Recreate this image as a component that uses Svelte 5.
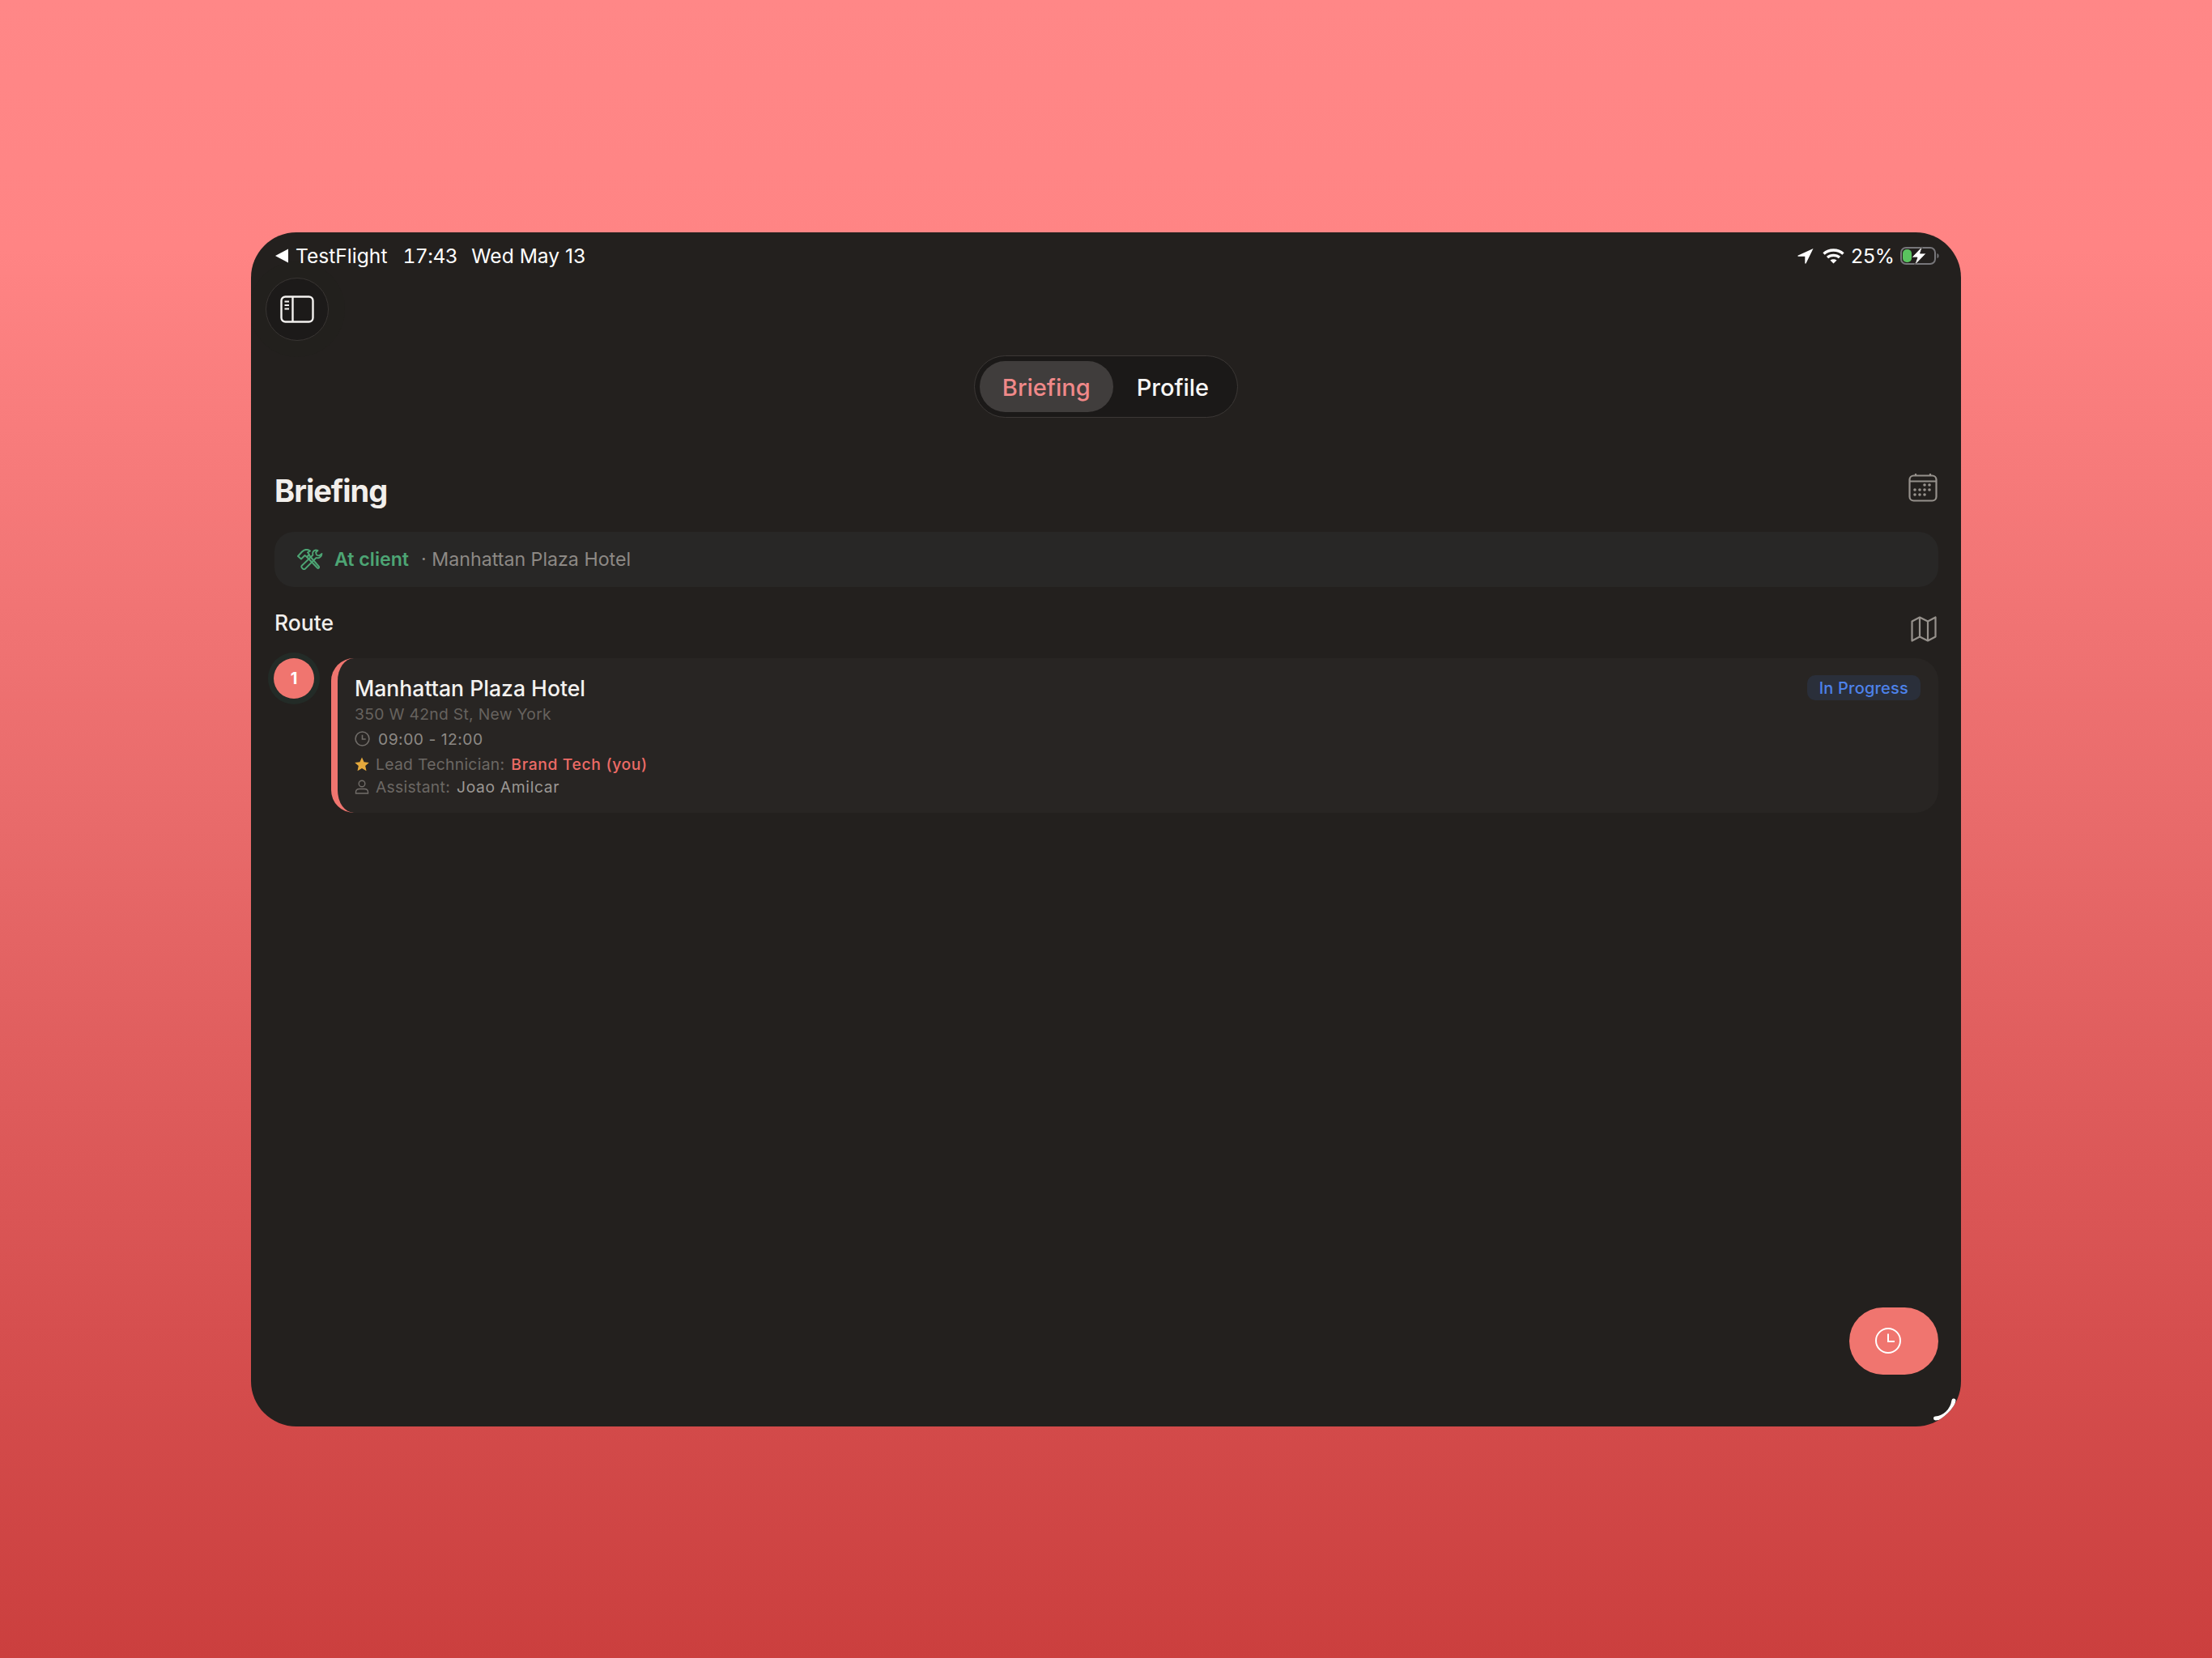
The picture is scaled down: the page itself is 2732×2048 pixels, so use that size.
<script>
  const stop = {
    index: 1,
    name: 'Manhattan Plaza Hotel',
    address: '350 W 42nd St, New York',
    time: '09:00 - 12:00',
    lead: 'Brand Tech (you)',
    assistant: 'Joao Amilcar',
    status: 'In Progress'
  };
</script>

<div class="page">
  <div class="device">
    <div class="status-bar">
      <div class="status-left">
        <svg class="back" width="16" height="18" viewBox="0 0 16 18"><path d="M16 0.5V17.500L0 9Z" fill="#fff"/></svg>
        <span>TestFlight</span>
        <span class="gap clock">17:43</span>
        <span class="gap date">Wed May 13</span>
      </div>
      <div class="status-right">
        <svg width="20" height="20" viewBox="0 0 20 20"><path d="M19.500 1 0.800 9.600c-.7.300-.5 1.200.2 1.200h8.300v8.200c0 .8 1 1 1.300.3Z" fill="#fff"/></svg>
        <svg class="wifi" width="27" height="20" viewBox="0 0 27 20" fill="none" stroke="#fff" stroke-width="3.400">
          <path d="M1.500 7.500C8 1.500 19 1.500 25.500 7.500"/>
          <path d="M6 12C10 8.500 17 8.500 21 12"/>
          <path d="M13.500 19.500 9.500 15.500C11.500 13.700 15.500 13.700 17.500 15.500Z" fill="#fff" stroke="none"/>
        </svg>
        <span class="pct">25%</span>
        <svg width="48" height="24" viewBox="0 0 48 24">
          <rect x="1" y="2" width="42" height="20" rx="6" fill="none" stroke="#77767a" stroke-width="2"/>
          <rect x="3" y="4" width="11" height="16" rx="5" fill="#5ac35f"/>
          <path d="M45.500 9c1.500.5 2 1.500 2 3s-.5 2.500-2 3Z" fill="#77767a"/>
          <path d="M27.500 0 14 14h7L17.500 24 32 9h-7.500Z" fill="#fff" stroke="#23201e" stroke-width="0.800"/>
        </svg>
      </div>
    </div>

    <button class="sidebar-btn" aria-label="Toggle sidebar">
      <svg width="42" height="34" viewBox="0 0 42 34" fill="none" stroke="#f4f2f0" stroke-width="2.400">
        <rect x="1.500" y="1.500" width="39" height="31" rx="5"/>
        <path d="M15.500 1.500V32.500"/>
        <path d="M5.500 7.500H11M5.500 12H11M5.500 16.500H11" stroke-width="2"/>
      </svg>
    </button>

    <div class="tabs-row">
      <div class="tabs">
        <div class="tab active">Briefing</div>
        <div class="tab">Profile</div>
      </div>
    </div>

    <div class="content">
      <div class="title-row">
        <h1>Briefing</h1>
        <svg class="cal" width="36" height="36" viewBox="0 0 36 36" fill="none" stroke="#96918c" stroke-width="2.200">
          <rect x="1.500" y="3.500" width="33" height="31" rx="5"/>
          <path d="M1.500 10.500H34.500M9 1V3.500M27 1V3.500"/>
          <g fill="#96918c" stroke="none">
            <circle cx="20" cy="15" r="1.800"/><circle cx="26" cy="15" r="1.800"/>
            <circle cx="8" cy="21" r="1.800"/><circle cx="14" cy="21" r="1.800"/><circle cx="20" cy="21" r="1.800"/><circle cx="26" cy="21" r="1.800"/>
            <circle cx="8" cy="27" r="1.800"/><circle cx="14" cy="27" r="1.800"/><circle cx="20" cy="27" r="1.800"/>
          </g>
        </svg>
      </div>

      <div class="at-client">
        <svg width="32" height="26" viewBox="0 0 32 26" fill="none" stroke="#4da574" stroke-width="2" stroke-linejoin="round" stroke-linecap="round">
          <path d="M1 9 6 3.500C9 .5 13 .5 16 2.500L13 4.500 15 7 12 10 9.500 8 5 12.500Z"/>
          <path d="M12 10 25 23.500C26 24.500 27.500 23.500 27 22L14.500 7.500"/>
          <path d="M23 1.500C20 2 18.500 4.500 19.500 7.500L6 20.500C5 21.500 5 22.500 6 23.500L7.500 25C8.500 25.500 9.500 25 10 24.500L23.500 11C27 12 30.500 9.500 30.500 6L27 8.500 24 7.500 23 4.500 25.500 2Z" stroke-width="1.800"/>
        </svg>
        <span class="at-label">At client</span>
        <span class="at-place">· Manhattan Plaza Hotel</span>
      </div>

      <div class="route-head">
        <h2>Route</h2>
        <svg class="map" width="32" height="32" viewBox="0 0 32 32" fill="none" stroke="#96918c" stroke-width="2.200" stroke-linejoin="round">
          <path d="M1.500 6.500 11 1.500 21 6.500 30.500 1.500V25.500L21 30.500 11 25.500 1.500 30.500Z"/>
          <path d="M11 1.500V25.500M21 6.500V30.500"/>
        </svg>
      </div>

      <div class="stop">
        <div class="num">{stop.index}</div>
        <div class="stop-card">
          <div class="stop-top">
            <div class="stop-name">{stop.name}</div>
            <div class="badge">{stop.status}</div>
          </div>
          <div class="address">{stop.address}</div>
          <div class="line time">
            <svg width="19" height="19" viewBox="0 0 18 18" fill="none" stroke="#716d69" stroke-width="1.500">
              <circle cx="9" cy="9" r="8"/><path d="M9 4.500V9.500H13"/>
            </svg>
            <span>{stop.time}</span>
          </div>
          <div class="line lead">
            <svg width="18" height="18" viewBox="0 0 18 18"><path d="M9 .5l2.600 5.700 6.200.7-4.600 4.200 1.300 6.100L9 14.100l-5.500 3.100 1.300-6.100L.2 6.900l6.200-.7Z" fill="#e5a93c"/></svg>
            <span class="muted">Lead Technician:</span>
            <span class="lead-name">{stop.lead}</span>
          </div>
          <div class="line assistant">
            <svg width="18" height="18" viewBox="0 0 18 18" fill="none" stroke="#716d69" stroke-width="1.400">
              <circle cx="9" cy="5" r="3.800"/><path d="M1.500 17v-1.500c0-2.500 2-4 4.500-4h6c2.500 0 4.500 1.500 4.500 4V17Z"/>
            </svg>
            <span class="muted">Assistant:</span>
            <span class="assistant-name">{stop.assistant}</span>
          </div>
        </div>
      </div>
    </div>

    <button class="fab" aria-label="Clock">
      <svg width="32" height="32" viewBox="0 0 32 32" fill="none" stroke="#fff" stroke-width="2">
        <circle cx="16" cy="16" r="15"/><path d="M16 7.500V17H24"/>
      </svg>
    </button>

    <svg class="grip" width="28" height="28" viewBox="0 0 28 28" fill="none" stroke="#fff" stroke-width="5" stroke-linecap="round">
      <path d="M2.500 25C13 24.500 23 16 25 3"/>
    </svg>
  </div>
</div>

<style>
  :global(body) {
    margin: 0;
    font-family: Inter, "Liberation Sans", sans-serif;
  }

  .page {
    width: 2732px;
    height: 2048px;
    display: flex;
    align-items: center;
    justify-content: center;
    background: linear-gradient(180deg, #ff8787 0%, #ff8484 15%, #e86a6a 50%, #d64f4f 80%, #cb3f3e 100%);
  }

  .device {
    position: relative;
    width: 2112px;
    height: 1475px;
    background: #23201e;
    border-radius: 56px;
    overflow: hidden;
    color: #f4f2f0;
  }

  .status-bar {
    box-sizing: border-box;
    height: 56px;
    padding: 2px 27px 0 30px;
    display: flex;
    align-items: center;
    justify-content: space-between;
    font-size: 24.600px;
    color: #fff;
  }

  .status-left, .status-right {
    display: flex;
    align-items: center;
  }

  .back {
    margin-right: 9px;
  }

  .gap {
    margin-left: 19px;
  }

  .clock {
    font-variant-numeric: tabular-nums;
    letter-spacing: -0.500px;
  }

  .date {
    margin-left: 17px;
  }

  .wifi {
    margin-left: 11px;
  }

  .pct {
    margin: 0 7px 0 8px;
  }

  .sidebar-btn {
    display: flex;
    align-items: center;
    justify-content: center;
    width: 78px;
    height: 78px;
    margin-left: 18px;
    padding: 0;
    border-radius: 50%;
    background: #1c1a19;
    border: 1.500px solid #3a3634;
    box-shadow: 0 0 0 20px rgba(30, 30, 28, 0.25);
  }

  .tabs-row {
    display: flex;
    justify-content: center;
    margin-top: 18px;
  }

  .tabs {
    display: flex;
    align-items: center;
    height: 77px;
    box-sizing: border-box;
    padding: 0 6px;
    background: #1b1918;
    border: 1.500px solid #3c3836;
    border-radius: 39px;
    font-size: 29px;
    font-weight: 500;
  }

  .tab {
    height: 63px;
    line-height: 65px;
    padding: 0 29px;
    border-radius: 32px;
    color: #f8f7f6;
  }

  .tab.active {
    padding: 0 28px;
    background: #403d3c;
    color: #f08989;
  }

  .content {
    padding: 0 28px 0 29px;
  }

  .title-row, .route-head, .stop-top {
    display: flex;
    align-items: flex-start;
    justify-content: space-between;
  }

  .title-row {
    margin-top: 63px;
    height: 64px;
  }

  h1 {
    margin: -5px 0 0;
    font-size: 38px;
    line-height: 64px;
    font-weight: 700;
    letter-spacing: -1px;
    color: #f2efec;
  }

  .cal {
    margin: 5px 1px 0 0;
  }

  .at-client {
    display: flex;
    align-items: center;
    height: 68px;
    margin-top: 14px;
    padding-left: 28px;
    background: #282726;
    border-radius: 24px;
    font-size: 23.200px;
  }

  .at-label {
    margin-left: 14px;
    font-weight: 600;
    color: #4da574;
  }

  .at-place {
    margin-left: 15px;
    color: #8d8985;
  }

  .route-head {
    margin-top: 26px;
    height: 62px;
  }

  h2 {
    margin: 0;
    font-size: 26.500px;
    line-height: 36px;
    font-weight: 500;
    color: #f2efec;
  }

  .map {
    margin: 10px 2px 0 0;
  }

  .stop {
    display: flex;
    align-items: flex-start;
  }

  .num {
    flex: none;
    width: 50px;
    height: 50px;
    margin: 0 21px 0 -1px;
    border-radius: 50%;
    background: #f0756f;
    box-shadow: 0 0 0 7px #232b27;
    color: #fff;
    font-size: 20px;
    font-weight: 700;
    line-height: 50px;
    text-align: center;
  }

  .stop-card {
    flex: 1;
    height: 191px;
    box-sizing: border-box;
    padding: 17px 22px 0 21px;
    background: #282523;
    border-left: 8px solid #f0756f;
    border-radius: 28px;
  }

  .stop-top {
    height: 40px;
  }

  .stop-name {
    font-size: 26.600px;
    line-height: 40px;
    font-weight: 500;
    color: #f4f2f0;
  }

  .badge {
    padding: 0 15px;
    height: 31px;
    line-height: 33px;
    border-radius: 10px;
    background: #2a2f3a;
    color: #4d82ea;
    font-size: 20px;
    font-weight: 500;
    letter-spacing: 0.200px;
    margin-top: 4px;
  }

  .address {
    margin-top: -1px;
    font-size: 19.300px;
    line-height: 26px;
    letter-spacing: 0.300px;
    color: #66625e;
  }

  .line {
    display: flex;
    align-items: center;
    gap: 8px;
    font-size: 19.300px;
    letter-spacing: 0.300px;
    height: 28px;
  }

  .time {
    margin-top: 4px;
    gap: 10px;
    color: #8d8985;
    letter-spacing: 0.500px;
  }

  .lead {
    margin-top: 3px;
  }

  .muted {
    color: #6c6864;
  }

  .lead-name {
    font-weight: 500;
    letter-spacing: 0.650px;
    color: #ec6b66;
  }

  .assistant-name {
    letter-spacing: 0.650px;
    color: #9c9894;
  }

  .fab {
    position: absolute;
    right: 28px;
    bottom: 64px;
    width: 110px;
    height: 83px;
    padding: 0 14px 0 0;
    border: none;
    border-radius: 42px;
    background: #f0756f;
    display: flex;
    align-items: center;
    justify-content: center;
  }

  .grip {
    position: absolute;
    right: 6px;
    bottom: 7px;
  }
</style>
